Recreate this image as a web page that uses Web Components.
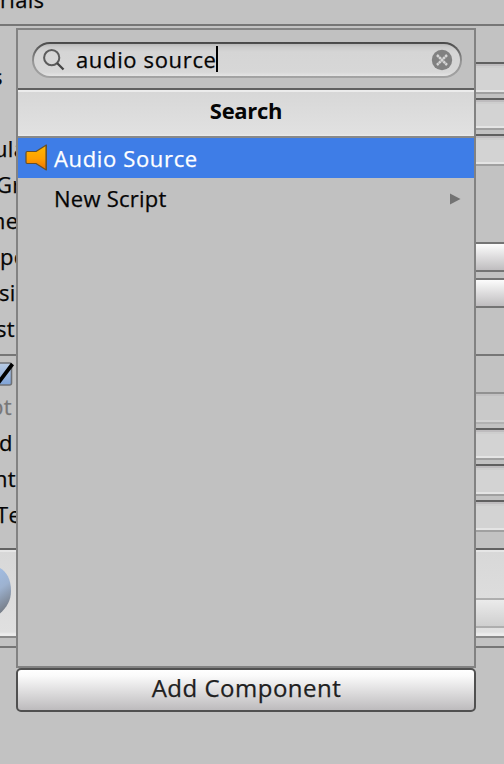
<!DOCTYPE html>
<html lang="en"><head><meta charset="utf-8"><title>Add Component</title>
<style>
html,body{margin:0;width:504px;height:764px;overflow:hidden;background:#c2c2c2}
body{font:22px/36px "Open Sans","Noto Sans",sans-serif;color:#050505;-webkit-text-stroke:.25px currentColor}
</style></head><body>
<unity-window></unity-window>
<script>
function define(name, html, setup){
  const t=document.createElement('template');t.innerHTML=html;
  customElements.define(name,class extends HTMLElement{
    constructor(){super();this.attachShadow({mode:'open'}).append(t.content.cloneNode(true));}
    connectedCallback(){if(setup)setup(this);}
  });
}
define('inspector-field',`<style>
:host{display:block;box-sizing:border-box;height:32px;border-top:2px solid #606060;border-bottom:2px solid #a0a0a0;background:linear-gradient(#bebcbe 0 2px,#cecece 2px 4px,#d3d3d3 4px 26px,#e4e4e4 26px)}
:host([kind=dim]){border-top-color:#919191;border-bottom-color:#b1b1b1;background:linear-gradient(#c1c0c1 0 2px,#c9c9c9 2px 26px,#d2d2d2 26px)}
:host([kind=button]){height:30px;border-color:#747474;background:linear-gradient(#fcfcfc,#bfbdbf)}
</style>`);
define('inspector-row',`<style>
:host{display:grid;grid-template-columns:16px 460px 28px;height:36px}
.l{overflow:hidden;display:flex;white-space:pre;letter-spacing:.3px}
.l span{margin-left:var(--x,0);line-height:33px}
.f{padding-top:2px;grid-column:3}
</style><div class="l"><span><slot></slot></span></div><div class="f"></div>`,e=>{
  e.shadowRoot.querySelector('span').style.setProperty('--x',(e.getAttribute('x')||0)+'px');
  const k=e.getAttribute('kind');
  if(k){const f=document.createElement('inspector-field');f.setAttribute('kind',k);e.shadowRoot.querySelector('.f').append(f);}
});
define('check-mark',`<style>:host{display:block;width:16px;height:30px}svg{display:block}</style>
<svg width="16" height="32" viewBox="0 0 16 32"><defs><linearGradient id="g" x2="0" y2="1"><stop stop-color="#b9cce5"/><stop offset="1" stop-color="#7fa3d8"/></linearGradient></defs>
<rect x="-12" y="7" width="23.5" height="22" rx="2" fill="url(#g)" stroke="#6f7277" stroke-width="1.6"/><path d="M-5 18L-1 26L12.5 8" fill="none" stroke="#000" stroke-width="3.8"/></svg>`);
define('material-block',`<style>
:host{display:grid;grid-template-columns:16px 460px 28px;box-sizing:border-box;height:90px;border-top:2px solid #626262;border-bottom:2px solid #898989;background:linear-gradient(#e6e6e6 0 2px,#d8d8d8 2px,#e0e0e0 82px,#ececec 84px)}
svg{display:block}.b{grid-column:3;margin-top:48px;height:26px;border:solid #aeaeae;border-width:2px 0;background:linear-gradient(#ebebeb,#cfcfcf)}
</style><svg width="16" height="86"><defs><linearGradient id="s" x2=".25" y2="1"><stop stop-color="#a3c0e8"/><stop offset=".5" stop-color="#9db2d0"/><stop offset="1" stop-color="#70757c"/></linearGradient></defs><path d="M-8 15C2 17 11 24 11 41C11 54 3 62-8 70Z" fill="url(#s)"/></svg><div class="b"></div>`);
define('unity-inspector',`<style>
:host{display:flex;flex-direction:column;height:764px}
.top{height:24px;border-bottom:2px solid #767676;margin-bottom:34px;overflow:hidden}
.top span{display:block;margin:-19px 0 0 0;letter-spacing:.3px}
.sep{height:34px;margin-top:6px;border-top:2px solid #767676}
.end{height:2px;margin-top:8px;background:#767676}
material-block{margin-top:14px}
</style>
<div class="top"><span>rials</span></div>
<inspector-row x="-8" kind="text">s</inspector-row>
<inspector-row kind="text"></inspector-row>
<inspector-row x="-6" kind="text">ular</inspector-row>
<inspector-row x="-4">Gr</inspector-row>
<inspector-row x="-15">me</inspector-row>
<inspector-row x="0" kind="button">pe</inspector-row>
<inspector-row x="-1" kind="button">si</inspector-row>
<inspector-row x="-4">st</inspector-row>
<div class="sep"><check-mark></check-mark></div>
<inspector-row x="-10" kind="dim" style="color:#777">pt</inspector-row>
<inspector-row x="-1" kind="text">d</inspector-row>
<inspector-row x="-6" kind="text">nt</inspector-row>
<inspector-row x="-4" kind="text">Te</inspector-row>
<material-block></material-block><div class="end"></div>`);
define('search-field',`<style>
:host{display:flex;align-items:center;box-sizing:border-box;height:36px;padding:2px 9px 2px 10px;border-radius:18px;background:linear-gradient(#484848,#777 35%,#959595 55%,#a3a3a3);position:relative}
:host::before{content:"";position:absolute;inset:2px;border-radius:16px;background:linear-gradient(#b9b9b9,#cbcbcb 3px,#d5d5d5 8px,#d7d7d7 28px,#e4e4e4)}
svg,span,i{position:relative;flex:none}.q{margin:-3px 0 0 10px;line-height:32px;letter-spacing:.65px;color:#050505}
i{width:2px;height:26px;background:#000;margin-left:-1px;top:-1px}.x{margin-left:auto}
</style><svg width="24" height="24" fill="none"><circle cx="9.7" cy="9.7" r="7.6" stroke="#5c5c5c" stroke-width="2"/><path d="M15 15L21.5 21.5" stroke="#444" stroke-width="2.3"/></svg>
<span class="q"><slot></slot></span><i></i>
<svg class="x" width="22" height="22"><circle cx="11" cy="11" r="10.2" fill="#818181"/><path d="M6 6l10 10M16 6L6 16" stroke="#d5d5d5" stroke-width="2.5" stroke-dasharray="2.5 .5"/></svg>`);
define('menu-item',`<style>
:host{display:flex;align-items:center;height:40px;padding:0 14px 0 6px}
:host([selected]){background:#3e7de7;color:#fff}
.i{width:30px;height:28px}.t{line-height:40px;letter-spacing:var(--ls,.65px)}
svg{display:block}.a{margin:2px -1px 0 auto}:host([selected]) .a,:host(:not([selected])) .i svg{display:none}
</style><div class="i"><svg width="28" height="28"><defs><linearGradient id="o" x2="0" y2="1"><stop stop-color="#ffb900"/><stop offset=".55" stop-color="#ffa000"/><stop offset="1" stop-color="#ed7000"/></linearGradient></defs><path d="M3.2 7.5H12L22.3 1V26L12 19.5H3.2Q2 19.5 2 18V9Q2 7.5 3.2 7.5Z" fill="url(#o)" stroke="#65502c" stroke-width="1.2" stroke-linejoin="round"/><path d="M22.3 1V26" stroke="#65502c" stroke-width="1.4"/></svg></div>
<span class="t"><slot></slot></span><svg class="a" width="12" height="12"><path d="M1 0.5L11.5 6L1 11.5Z" fill="#737373"/></svg>`);
define('component-popup',`<style>
:host{display:block;box-sizing:border-box;width:460px;height:640px;border:2px solid #828282;background:#c1c1c1}
.s{padding:12px 12px 10px 14px}
.h{height:46px;border-top:2px solid #606060;border-bottom:2px solid #898989;background:linear-gradient(#ececec 0 2px,#d7d7d7 2px,#e1e1e1 44px,#ececec 46px);text-align:center;font-weight:700;letter-spacing:-.3px;line-height:40px;-webkit-text-stroke:0}
</style><div class="s"><search-field>audio source</search-field></div><div class="h">Search</div>
<menu-item selected>Audio Source</menu-item><menu-item style="--ls:.25px">New Script</menu-item>`);
define('add-button',`<style>
:host{display:block;box-sizing:border-box;width:460px;height:44px;border:2px solid #505050;border-radius:5px;background:linear-gradient(#fff,#fafafa 15%,#bdbbbd);text-align:center;font-size:24px;line-height:35px;letter-spacing:.5px;text-indent:1px;color:#202020}
</style><slot></slot>`);
define('unity-window',`<style>
:host{display:block;position:relative;width:504px;height:764px;overflow:hidden}
.o{position:absolute;left:16px;top:28px}
</style><unity-inspector></unity-inspector><div class="o"><component-popup></component-popup><add-button>Add Component</add-button></div>`);
</script></body></html>
